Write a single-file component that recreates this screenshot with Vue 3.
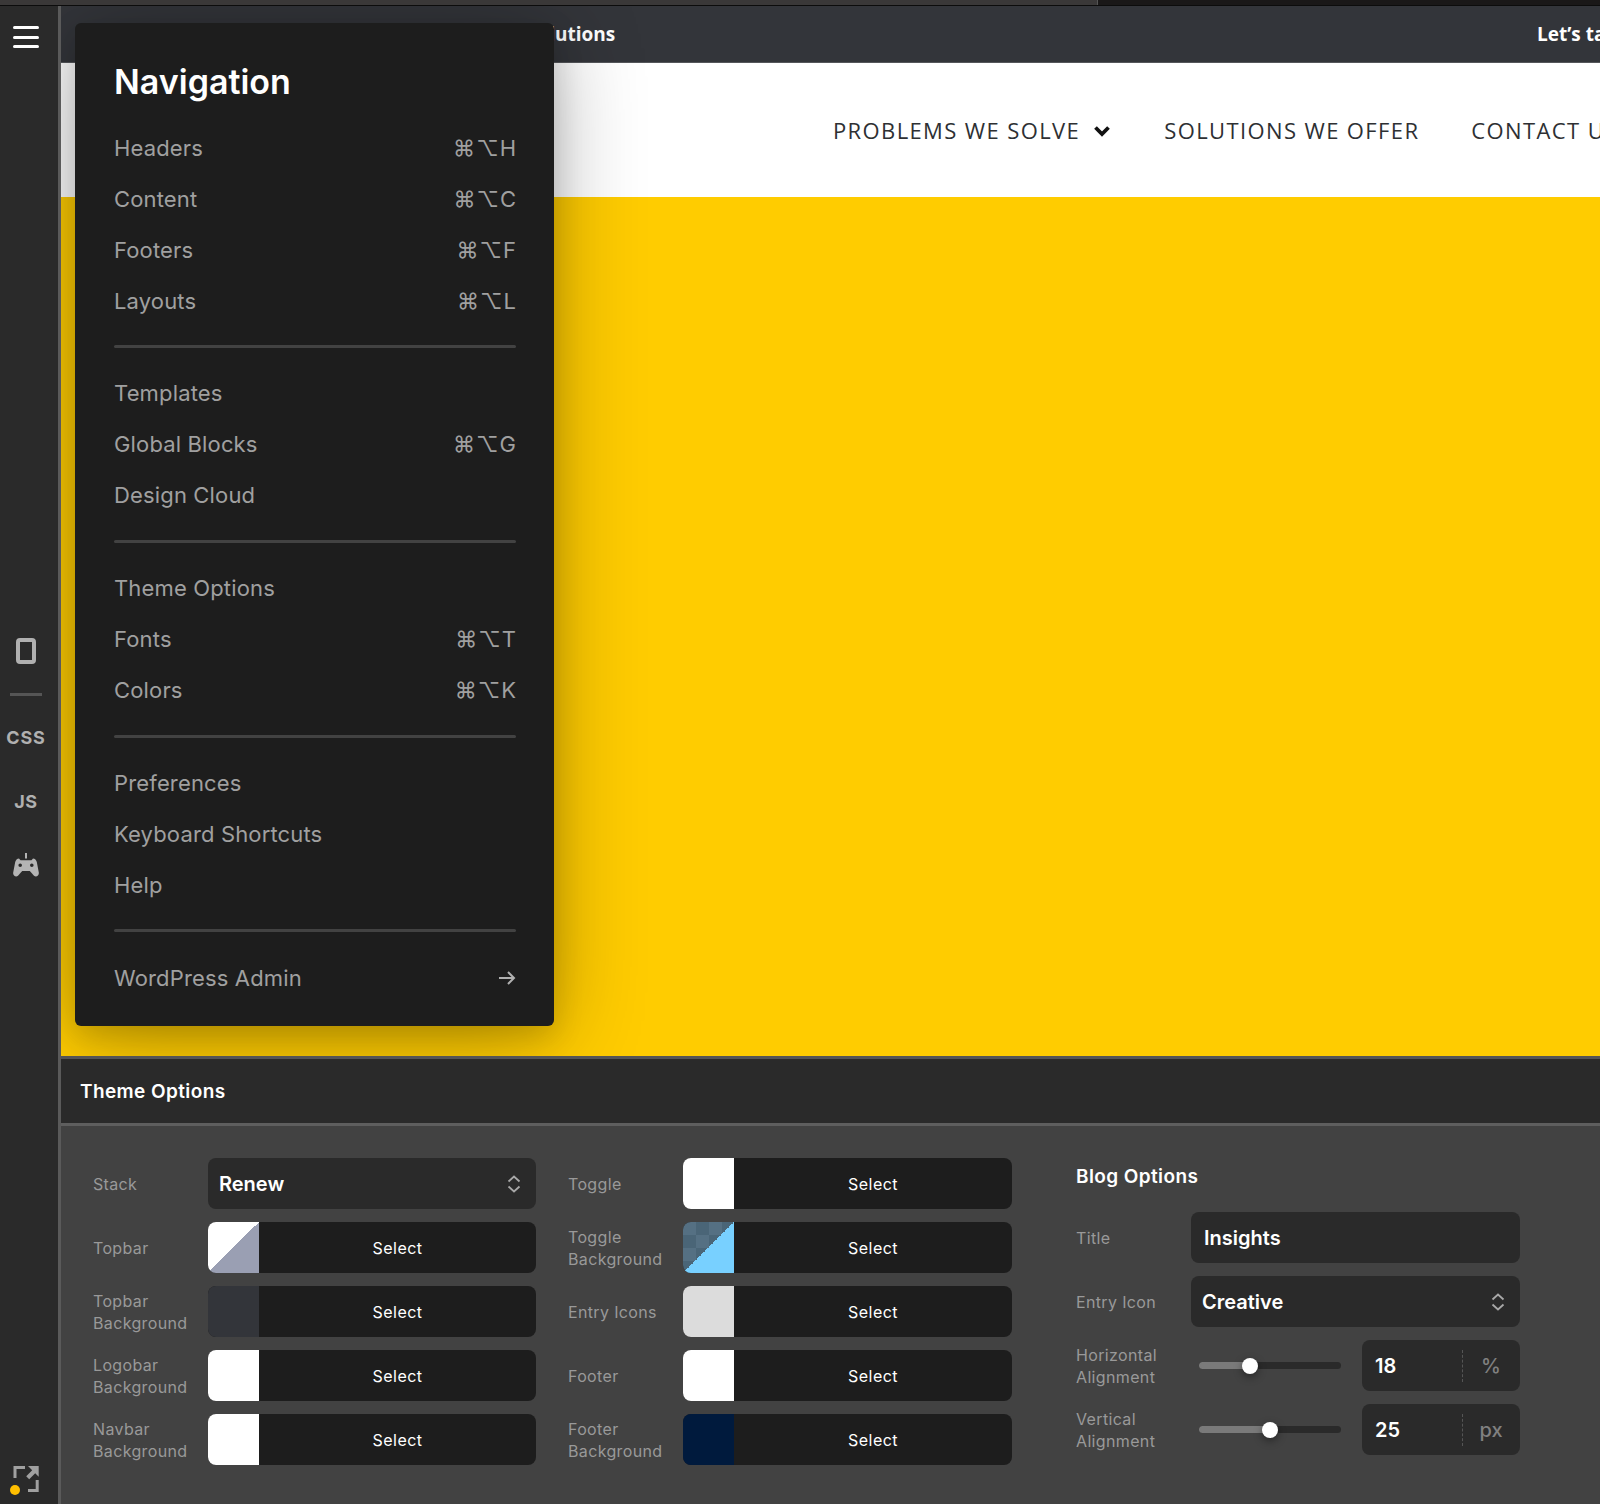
<template>
  <div class="app">
    <div class="window-strip"><div class="strip-dark"></div></div>
    <div class="main">
      <aside class="sidebar">
        <button class="burger"><span></span><span></span><span></span></button>
        <div class="tools">
          <div class="device"></div>
          <div class="tool-line"></div>
          <div class="tool-text css">CSS</div>
          <div class="tool-text js">JS</div>
          <svg class="gamepad" width="26" height="25" viewBox="0 0 26 25">
            <path fill="#b4b4b4" fill-rule="evenodd" d="M12 0h2v5.500h-2zM6 5.500l1.500 1.700h11L20 5.500c1.900.2 3.300 1.500 3.800 3.500l2 10.500c.5 3-2.600 5-4.800 3.200l-4.200-4.700H9.200L5 22.700c-2.200 1.800-5.300-.2-4.800-3.200l2-10.500C2.700 7 4.100 5.700 6 5.500zM7.200 10.500a1.800 1.800 0 1 0 0 3.600 1.800 1.800 0 0 0 0-3.600zM18.800 10.500a1.800 1.800 0 1 0 0 3.600 1.800 1.800 0 0 0 0-3.600z"/>
          </svg>
        </div>
        <svg class="corner" width="32" height="30" viewBox="0 0 32 30">
          <path fill="none" stroke="#a0a0a0" stroke-width="3" d="M5 13V2.500H15M27.200 15V25.500H18"/>
          <path fill="#a0a0a0" d="M18 1h10.700v10.700l-3.500-3.500-6 6-3-3 6-6z"/>
          <circle cx="5" cy="25" r="5" fill="#ffbf00"/>
        </svg>
      </aside>

      <div class="content">
        <section class="preview">
          <div class="topbar">
            <span class="topbar-left">Solutions</span>
            <span class="topbar-right">Let’s talk</span>
          </div>
          <div class="logobar">
            <nav class="site-nav">
              <span class="nav-item">PROBLEMS WE SOLVE
                <svg width="16" height="12" viewBox="0 0 16 12"><path fill="none" stroke="#111" stroke-width="3.800" d="M1.500 2.500L8 9l6.500-6.500"/></svg>
              </span>
              <span class="nav-item">SOLUTIONS WE OFFER</span>
              <span class="nav-item">CONTACT US</span>
            </nav>
          </div>
          <div class="hero"></div>

          <div class="menu">
            <h2 class="menu-title">Navigation</h2>
            <template v-for="(group, i) in menuGroups" :key="i">
              <div v-if="i > 0" class="menu-line"></div>
              <div v-for="item in group" :key="item.label" class="menu-row">
                <span>{{ item.label }}</span>
                <span v-if="item.key" class="shortcut"><i>⌘</i><i class="opt">⌥</i>{{ item.key }}</span>
                <svg v-if="item.arrow" width="17" height="14" viewBox="0 0 17 14"><path fill="none" stroke="#b0b0b0" stroke-width="2" d="M0 7h15M9 1l6 6-6 6"/></svg>
              </div>
            </template>
          </div>
        </section>

        <section class="panel">
          <header class="panel-head">Theme Options</header>
          <div class="panel-body">
            <div class="col">
              <div class="field">
                <label>Stack</label>
                <div class="dropdown">
                  <span>Renew</span>
                  <svg width="14" height="18" viewBox="0 0 14 18"><path fill="none" stroke="#a8a8a8" stroke-width="1.800" d="M1.500 6.500L7 1.500l5.500 5M1.500 11.500L7 16.500l5.500-5"/></svg>
                </div>
              </div>
              <div v-for="row in colorsLeft" :key="row.label" class="field">
                <label v-html="row.label"></label>
                <div class="picker">
                  <div class="swatch" :class="row.swatch"></div>
                  <div class="pick-btn">Select</div>
                </div>
              </div>
            </div>

            <div class="col">
              <div v-for="row in colorsMiddle" :key="row.label" class="field">
                <label v-html="row.label"></label>
                <div class="picker">
                  <div class="swatch" :class="row.swatch"></div>
                  <div class="pick-btn">Select</div>
                </div>
              </div>
            </div>

            <div class="col blog">
              <h3 class="blog-title">Blog Options</h3>
              <div class="field">
                <label>Title</label>
                <div class="dropdown title-input"><span>Insights</span></div>
              </div>
              <div class="field">
                <label>Entry Icon</label>
                <div class="dropdown">
                  <span>Creative</span>
                  <svg width="14" height="18" viewBox="0 0 14 18"><path fill="none" stroke="#a8a8a8" stroke-width="1.800" d="M1.500 6.500L7 1.500l5.500 5M1.500 11.500L7 16.500l5.500-5"/></svg>
                </div>
              </div>
              <div v-for="s in sliders" :key="s.label" class="field">
                <label v-html="s.label"></label>
                <div class="slider-wrap">
                  <div class="slider">
                    <div class="slider-fill" :style="{ width: s.pos + 'px' }"></div>
                    <div class="slider-thumb" :style="{ left: s.pos + 'px' }"></div>
                  </div>
                  <div class="number-box">
                    <span class="number">{{ s.value }}</span>
                    <span class="dash"></span>
                    <span class="unit">{{ s.unit }}</span>
                  </div>
                </div>
              </div>
            </div>
          </div>
        </section>
      </div>
    </div>
  </div>
</template>

<script setup>
const menuGroups = [
  [
    { label: 'Headers', key: 'H' },
    { label: 'Content', key: 'C' },
    { label: 'Footers', key: 'F' },
    { label: 'Layouts', key: 'L' }
  ],
  [
    { label: 'Templates' },
    { label: 'Global Blocks', key: 'G' },
    { label: 'Design Cloud' }
  ],
  [
    { label: 'Theme Options' },
    { label: 'Fonts', key: 'T' },
    { label: 'Colors', key: 'K' }
  ],
  [
    { label: 'Preferences' },
    { label: 'Keyboard Shortcuts' },
    { label: 'Help' }
  ],
  [{ label: 'WordPress Admin', arrow: true }]
]

const colorsLeft = [
  { label: 'Topbar', swatch: 'sw-topbar' },
  { label: 'Topbar<br>Background', swatch: 'sw-dark' },
  { label: 'Logobar<br>Background', swatch: 'sw-white' },
  { label: 'Navbar<br>Background', swatch: 'sw-white' }
]

const colorsMiddle = [
  { label: 'Toggle', swatch: 'sw-white' },
  { label: 'Toggle<br>Background', swatch: 'sw-toggle' },
  { label: 'Entry Icons', swatch: 'sw-grey' },
  { label: 'Footer', swatch: 'sw-white' },
  { label: 'Footer<br>Background', swatch: 'sw-navy' }
]

const sliders = [
  { label: 'Horizontal<br>Alignment', value: 18, unit: '%', pos: 51 },
  { label: 'Vertical<br>Alignment', value: 25, unit: 'px', pos: 71 }
]
</script>

<style>
html, body {
  margin: 0;
  background: #424242;
}
</style>

<style scoped>
.app {
  width: 1600px;
  height: 1504px;
  overflow: hidden;
  font-family: Inter, "DejaVu Sans", sans-serif;
  display: flex;
  flex-direction: column;
}

.window-strip {
  height: 5px;
  background: #3a3838;
  border-bottom: 1px solid #0c0c0c;
  display: flex;
  justify-content: flex-end;
}
.strip-dark {
  width: 502px;
  background: #1a1818;
  border-left: 1px solid #555;
}

.main {
  flex: 1;
  display: flex;
  min-height: 0;
}

.sidebar {
  width: 52px;
  flex: none;
  background: #2a2a2a;
  border-right: 3px solid #5a5a5a;
  display: flex;
  flex-direction: column;
  align-items: center;
  padding: 20px 6px 0 0;
}
.burger {
  width: 26px;
  height: 22px;
  padding: 0;
  border: 0;
  background: none;
  display: flex;
  flex-direction: column;
  justify-content: space-between;
}
.burger span {
  display: block;
  height: 3px;
  background: #fff;
  border-radius: 2px;
}
.tools {
  margin-top: 590px;
  display: flex;
  flex-direction: column;
  align-items: center;
}
.device {
  width: 20px;
  height: 26px;
  box-sizing: border-box;
  border: 4px solid #b0b0b0;
  border-radius: 4px;
}
.tool-line {
  width: 32px;
  height: 3px;
  background: #555;
  margin-top: 29px;
}
.tool-text {
  color: #b0b0b0;
  font-size: 18px;
  font-weight: 700;
  line-height: 22px;
}
.css {
  margin-top: 31px;
  letter-spacing: 0.8px;
  white-space: nowrap;
}
.js {
  margin-top: 42px;
  letter-spacing: 0.5px;
}
.gamepad {
  margin-top: 40px;
}
.corner {
  margin-top: auto;
  margin-bottom: 9px;
}

.content {
  width: 1539px;
  flex: none;
  display: flex;
  flex-direction: column;
}

.preview {
  height: 1050px;
  flex: none;
  position: relative;
  overflow: hidden;
  display: flex;
  flex-direction: column;
}
.topbar {
  height: 56px;
  flex: none;
  background: #33353a;
  border-bottom: 1px solid #55575b;
  display: flex;
  align-items: center;
  justify-content: space-between;
  padding-left: 466px;
  font-family: "Open Sans", sans-serif;
  font-size: 19px;
  font-weight: 700;
  color: #fff;
  white-space: nowrap;
}
.topbar-right {
  margin-right: -23px;
}
.logobar {
  height: 134px;
  flex: none;
  background: #fff;
  display: flex;
  align-items: center;
  padding-left: 772px;
  white-space: nowrap;
}
.site-nav {
  display: flex;
  gap: 52px;
  font-family: "Open Sans", sans-serif;
  font-size: 22px;
  letter-spacing: 1.38px;
  color: #2e3033;
}
.nav-item svg {
  margin: 0 2px 0 7px;
  vertical-align: 2px;
}
.hero {
  flex: 1;
  background: #ffcc00;
}

.menu {
  position: absolute;
  left: 14px;
  top: 17px;
  width: 479px;
  height: 1003px;
  box-sizing: border-box;
  padding: 0 38px 0 39px;
  background: #1d1d1d;
  border-radius: 6px;
  box-shadow: 0 10px 30px rgba(0, 0, 0, 0.15), 0 10px 90px rgba(0, 0, 0, 0.3);
  color: #a0a0a0;
}
.menu-title {
  margin: 0;
  height: 99px;
  line-height: 118px;
  font-size: 34px;
  font-weight: 600;
  color: #fff;
}
.menu-row {
  height: 51px;
  display: flex;
  align-items: center;
  justify-content: space-between;
  font-size: 22px;
  letter-spacing: 0.15px;
}
.menu-line {
  height: 3px;
  margin: 19px 0 19.800px;
  background: #424242;
  border-radius: 2px;
}
.shortcut {
  letter-spacing: 0;
}
.shortcut i {
  font-style: normal;
  font-size: 22px;
  margin-right: 1px;
}

.panel {
  flex: 1;
  display: flex;
  flex-direction: column;
  min-height: 0;
}
.panel-head {
  height: 64px;
  flex: none;
  background: #2a2a2a;
  border-top: 3px solid #555;
  border-bottom: 3px solid #5e5e5e;
  padding-left: 19px;
  display: flex;
  align-items: center;
  color: #fff;
  font-size: 19px;
  font-weight: 600;
  letter-spacing: 0.4px;
}
.panel-body {
  flex: 1;
  background: #424242;
  padding: 32px 0 0 32px;
  display: grid;
  grid-template-columns: 443px 443px 475px;
  column-gap: 33px;
  align-content: start;
}
.col {
  display: flex;
  flex-direction: column;
  gap: 13px;
}
.col:nth-child(2) {
  margin-left: -1px;
}
.blog {
  margin-left: 31px;
}
.blog-title {
  margin: 0 0 -1px;
  height: 42px;
  line-height: 38px;
  color: #fff;
  font-size: 19px;
  font-weight: 600;
  letter-spacing: 0.4px;
}
.field {
  height: 51px;
  display: flex;
  align-items: center;
}
.field label {
  width: 115px;
  flex: none;
  color: #999;
  font-size: 16px;
  line-height: 22px;
  letter-spacing: 0.35px;
}
.dropdown {
  flex: 1;
  height: 51px;
  box-sizing: border-box;
  background: #2a2a2a;
  border-radius: 8px;
  padding: 0 15px 0 11px;
  display: flex;
  align-items: center;
  justify-content: space-between;
  color: #fff;
  font-size: 20px;
  font-weight: 600;
}
.title-input {
  padding-left: 13px;
}
.picker {
  flex: 1;
  height: 51px;
  display: flex;
  border-radius: 8px;
  overflow: hidden;
  background: #1d1d1d;
}
.swatch {
  width: 51px;
  flex: none;
}
.pick-btn {
  flex: 1;
  display: flex;
  align-items: center;
  justify-content: center;
  color: #fff;
  font-size: 16px;
  letter-spacing: 0.5px;
}
.sw-white {
  background: #fff;
}
.sw-dark {
  background: #33353a;
}
.sw-grey {
  background: #dcdcdc;
}
.sw-navy {
  background: #001a3d;
}
.sw-topbar {
  background: linear-gradient(to top left, #9a9fb3 50%, #fff 50%);
}
.sw-toggle {
  background:
    linear-gradient(to bottom right, transparent 50%, #78d0ff 50%),
    conic-gradient(#4a6577 25%, #557083 0 50%, #4a6577 0 75%, #557083 0) 0 0 / 26px 26px;
}

.slider-wrap {
  flex: 1;
  display: flex;
  align-items: center;
  justify-content: space-between;
  padding-left: 8px;
}
.slider {
  width: 142px;
  height: 7px;
  background: #2a2a2a;
  border-radius: 4px;
  position: relative;
}
.slider-fill {
  height: 100%;
  background: #7a7a7a;
  border-radius: 4px 0 0 4px;
}
.slider-thumb {
  position: absolute;
  top: 50%;
  width: 16px;
  height: 16px;
  margin: -8px 0 0 -8px;
  background: #fff;
  border-radius: 50%;
  box-shadow: 0 3px 8px rgba(0, 0, 0, 0.4);
}
.number-box {
  width: 158px;
  height: 51px;
  box-sizing: border-box;
  background: #2a2a2a;
  border-radius: 8px;
  display: flex;
  align-items: center;
  padding-left: 13px;
  position: relative;
}
.number {
  color: #fff;
  font-size: 20px;
  font-weight: 600;
}
.dash {
  position: absolute;
  left: 100px;
  top: 10px;
  height: 32px;
  border-left: 1px dashed #555;
}
.unit {
  position: absolute;
  left: 100px;
  right: 0;
  text-align: center;
  color: #808080;
  font-size: 20px;
  font-weight: 500;
}
</style>
